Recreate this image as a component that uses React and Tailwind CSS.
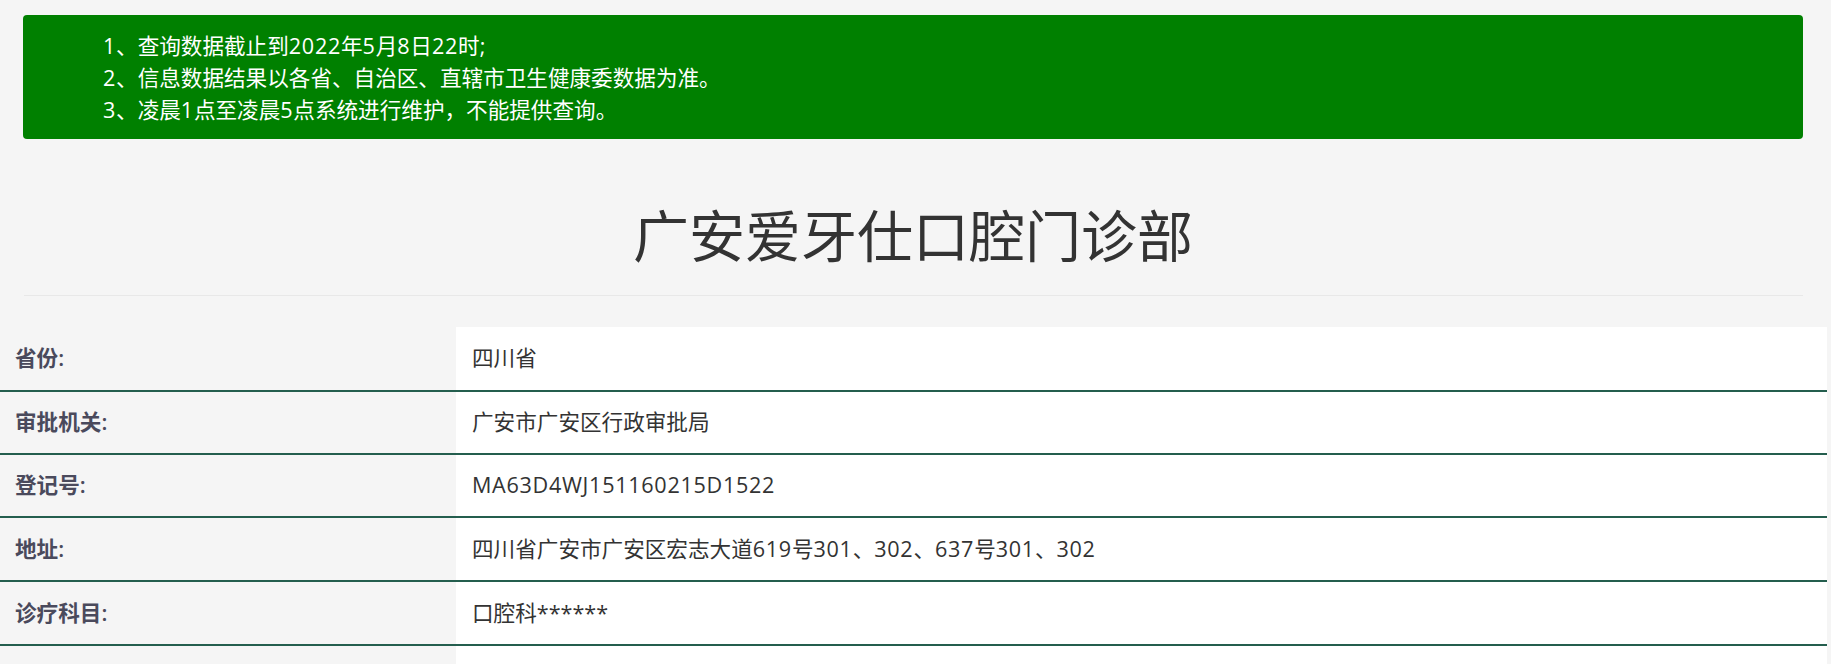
function T({ children }) {
  const parts = String(children).split(/([A-Za-z0-9;]+)/);
  return (
    <>
      {parts.map((p, i) =>
        /^[A-Za-z0-9;]+$/.test(p) ? (
          <span key={i} className="tracking-[0.7px]">
            {p}
          </span>
        ) : (
          <span key={i}>{p}</span>
        )
      )}
    </>
  );
}

export default function App() {
  const rows = [
    ["省份", "四川省", "h-[65px]"],
    ["审批机关", "广安市广安区行政审批局", "h-[63px]"],
    ["登记号", "MA63D4WJ151160215D1522", "h-[63px]"],
    ["地址", "四川省广安市广安区宏志大道619号301、302、637号301、302", "h-[64px]"],
    ["诊疗科目", "口腔科******", "h-[64px]"],
    ["", "", "h-[63px]"],
  ];
  return (
    <div
      className="min-h-screen bg-[#f5f5f5] text-[#333]"
      style={{ fontFamily: '"Open Sans", "Noto Sans CJK SC", sans-serif' }}
    >
      <div className="ml-[23px] mr-[28px] pt-[15px]">
        <div className="bg-[#008000] rounded-[4px] pl-[80px] pt-[15px] pb-[13px] text-white text-[21.6px] leading-[32px]">
          <div>
            <T>1、查询数据截止到2022年5月8日22时;</T>
          </div>
          <div>
            <T>2、信息数据结果以各省、自治区、直辖市卫生健康委数据为准。</T>
          </div>
          <div>
            <T>3、凌晨1点至凌晨5点系统进行维护，不能提供查询。</T>
          </div>
        </div>
        <h1 className="mt-[65px] text-center text-[56px] leading-[62px] text-[#333]">
          广安爱牙仕口腔门诊部
        </h1>
        <div className="mt-[29px] ml-px h-px bg-[#e8e8e8]" />
      </div>
      <div className="mt-[31px] w-[1827px]">
        {rows.map(([k, v, h], i) => (
          <div key={i} className={`flex ${h} border-b-2 border-[#245e4e] text-[21.6px]`}>
            <div className="w-[456px] shrink-0 flex items-center pl-[15px] text-[#4a4a5c]">
              {k && (
                <>
                  <span className="font-bold">{k}</span>
                  <span className="font-semibold">:</span>
                </>
              )}
            </div>
            <div className="flex-1 bg-white flex items-center pl-[16px] text-[#333]">
              <T>{v}</T>
            </div>
          </div>
        ))}
      </div>
    </div>
  );
}
